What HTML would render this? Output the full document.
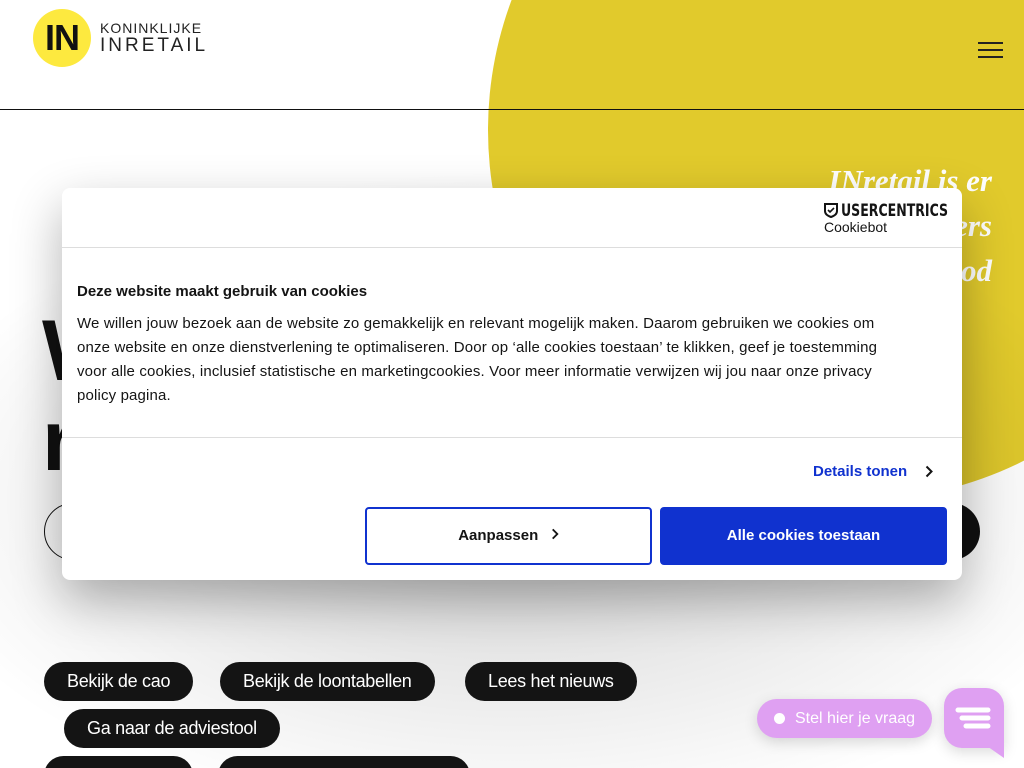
<!DOCTYPE html>
<html><head><meta charset="utf-8"><style>
*{margin:0;padding:0;box-sizing:border-box}
html,body{width:1024px;height:768px;overflow:hidden}
body{position:relative;background:#fff;font-family:"Liberation Sans",sans-serif}
.circ{position:absolute;left:488px;top:-240px;width:740px;height:740px;border-radius:50%;background:#e1ca2c}
.hdr{position:absolute;left:0;top:0;width:1024px;height:110px;border-bottom:1px solid #111}
.logo{position:absolute;left:33px;top:9px;width:58px;height:58px;border-radius:50%;background:#fde93f;font-weight:bold;font-size:36px;color:#111;text-align:center;line-height:58px;letter-spacing:-1px}
.lt1{position:absolute;left:100px;top:20px;font-size:14px;letter-spacing:1px;color:#222}
.lt2{position:absolute;left:100px;top:35px;font-size:19px;letter-spacing:3px;color:#222}
.burg{position:absolute;left:978px;top:42px;width:25px}
.burg i{display:block;height:2px;background:#222;margin-bottom:5px}
.quote{position:absolute;right:32px;top:158px;font-family:"Liberation Serif",serif;font-style:italic;font-weight:bold;font-size:31px;color:#fff;text-align:right;line-height:45px}
.big{position:absolute;left:42px;top:306px;font-size:86px;font-weight:bold;color:#111;line-height:90px}
.ob{position:absolute;left:44px;top:503px;width:80px;height:57px;border:1px solid #111;border-radius:29px}
.bb{position:absolute;left:900px;top:503px;width:80px;height:57px;background:#111;border-radius:29px}
.shade{position:absolute;left:0;top:110px;width:1024px;height:658px;background:radial-gradient(ellipse 620px 330px at 512px 390px,rgba(0,0,0,.18),rgba(0,0,0,0) 100%)}
.pill{position:absolute;height:39px;background:#141414;color:#fff;border-radius:20px;font-size:18px;line-height:39px;padding:0 23px;white-space:nowrap;letter-spacing:-.3px}
.dlg{position:absolute;left:62px;top:188px;width:900px;height:392px;background:#fff;border-radius:8px;box-shadow:0 20px 50px rgba(0,0,0,.3)}
.dlg .top{height:60px;border-bottom:1px solid #ddd;position:relative}
.uc{position:absolute;left:779px;top:13px;font-weight:bold;font-size:17px;color:#141414;font-family:"DejaVu Sans Condensed","Liberation Sans Narrow",sans-serif;transform:scaleX(.82);transform-origin:left}
.cb{position:absolute;left:762px;top:31px;font-size:14px;color:#141414}
h2{position:absolute;left:15px;top:95px;font-size:15px;color:#141414}
.txt{position:absolute;left:15px;top:124px;width:880px;font-size:15px;line-height:24px;color:#141414;white-space:nowrap;letter-spacing:.15px}
.sep{position:absolute;left:0;top:249px;width:900px;border-top:1px solid #ddd}
.det{position:absolute;left:751px;top:275px;color:#1032cf;font-weight:bold;font-size:15px}
.b1{position:absolute;left:303px;top:319px;width:287px;height:58px;border:2px solid #1032cf;border-radius:4px;text-align:center;line-height:54px;font-weight:bold;font-size:15px;color:#141414}
.b2{position:absolute;left:598px;top:319px;width:287px;height:58px;background:#1032cf;border-radius:4px;text-align:center;line-height:58px;font-weight:bold;font-size:15px;color:#fff}
.chat{position:absolute;left:757px;top:699px;width:175px;height:39px;border-radius:20px;background:#dfa0f2;color:#fff;font-size:16px;line-height:39px;padding-left:38px;box-shadow:0 4px 14px rgba(0,0,0,.15)}
.chat:before{content:"";position:absolute;left:17px;top:14px;width:11px;height:11px;border-radius:50%;background:#fff}
.cbub{position:absolute;left:944px;top:688px;width:60px;height:60px;border-radius:18px 18px 0 18px;background:#dfa0f2;box-shadow:0 4px 14px rgba(0,0,0,.15)}
</style></head><body>
<div class="circ"></div>
<div class="hdr"></div>
<div class="logo">IN</div>
<div class="lt1">KONINKLIJKE</div>
<div class="lt2">INRETAIL</div>
<div class="burg"><i></i><i></i><i></i></div>
<div class="quote">INretail is er<br>ers<br>od</div>
<div class="big">W<br>r</div>
<div class="ob"></div>
<div class="bb"></div>
<div class="shade"></div>
<div class="pill" style="left:44px;top:662px">Bekijk de cao</div>
<div class="pill" style="left:220px;top:662px">Bekijk de loontabellen</div>
<div class="pill" style="left:465px;top:662px">Lees het nieuws</div>
<div class="pill" style="left:64px;top:709px">Ga naar de adviestool</div>
<div class="pill" style="left:44px;top:756px;width:149px"></div>
<div class="pill" style="left:218px;top:756px;width:252px"></div>
<div class="dlg">
 <div class="top">
  <svg style="position:absolute;left:762px;top:15px" width="14" height="15" viewBox="0 0 14 15"><path d="M1 1h12v7c0 3-3 5-6 6C4 13 1 11 1 8z" fill="none" stroke="#141414" stroke-width="2"/><path d="M4 7l2 2 4-4" fill="none" stroke="#141414" stroke-width="1.6"/></svg>
  <div class="uc">USERCENTRICS</div>
  <div class="cb">Cookiebot</div>
 </div>
 <h2>Deze website maakt gebruik van cookies</h2>
 <div class="txt">We willen jouw bezoek aan de website zo gemakkelijk en relevant mogelijk maken. Daarom gebruiken we cookies om<br>onze website en onze dienstverlening te optimaliseren. Door op ‘alle cookies toestaan’ te klikken, geef je toestemming<br>voor alle cookies, inclusief statistische en marketingcookies. Voor meer informatie verwijzen wij jou naar onze privacy<br>policy pagina.</div>
 <div class="sep"></div>
 <div class="det">Details tonen</div>
 <svg style="position:absolute;left:863px;top:277px" width="8" height="13" viewBox="0 0 8 13"><path d="M1.5 1.5l5 5-5 5" fill="none" stroke="#141414" stroke-width="2"/></svg>
 <div class="b1">Aanpassen &nbsp;&nbsp;<svg width="8" height="12" viewBox="0 0 8 13"><path d="M1.5 1.5l5 5-5 5" fill="none" stroke="#141414" stroke-width="2"/></svg></div>
 <div class="b2">Alle cookies toestaan</div>
</div>
<div class="chat">Stel hier je vraag</div>
<div class="cbub"><svg width="60" height="60"><path d="M14 22h30M18 30h26M22 38h22" stroke="#fff" stroke-width="5" stroke-linecap="round"/></svg></div>
<svg style="position:absolute;left:984px;top:744px" width="21" height="15"><path d="M0 0h20v14z" fill="#dfa0f2"/></svg>
</body></html>
